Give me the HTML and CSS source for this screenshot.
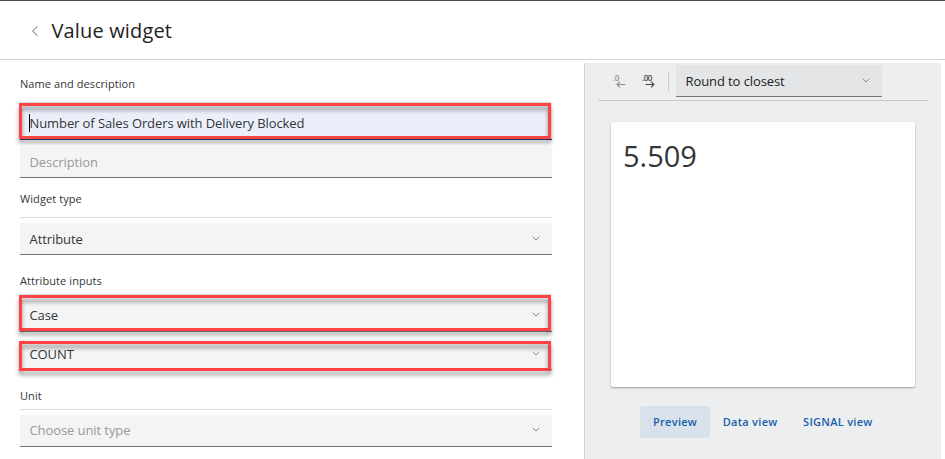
FILE: index.html
```html
<!DOCTYPE html>
<html lang="en">
<head>
<meta charset="utf-8">
<title>Value widget</title>
<link rel="stylesheet" href="styles.css">
</head>
<body>
<header class="header">
  <svg class="back" viewBox="0 0 8 12"><path d="M6.500 1.200 1.500 6l5 4.800"/></svg>
  <h1 class="title">Value widget</h1>
</header>
<main class="main">
  <form class="form">
    <div class="label">Name and description</div>
    <div class="field active raised frame frame-name"><span class="caret"></span><span>Number of Sales Orders with Delivery Blocked</span></div>
    <div class="field empty next"><span>Description</span></div>
    <div class="label">Widget type</div>
    <div class="field"><span>Attribute</span><svg class="chev" viewBox="0 0 8 5"><path d="M.7.8 4 4 7.300.8"/></svg></div>
    <div class="label low">Attribute inputs</div>
    <div class="field raised frame frame-case"><span>Case</span><svg class="chev" viewBox="0 0 8 5"><path d="M.7.8 4 4 7.300.8"/></svg></div>
    <div class="field next frame frame-count"><span>COUNT</span><svg class="chev" viewBox="0 0 8 5"><path d="M.7.8 4 4 7.300.8"/></svg></div>
    <div class="label low">Unit</div>
    <div class="field empty raised"><span>Choose unit type</span><svg class="chev" viewBox="0 0 8 5"><path d="M.7.8 4 4 7.300.8"/></svg></div>
  </form>
  <aside class="panel">
    <div class="toolbar">
      <div class="dec less"><span>.0</span><svg viewBox="0 0 9 6"><path d="M8.500 3H1M3.500.5 1 3l2.500 2.500"/></svg></div>
      <div class="dec more"><span>.00</span><svg viewBox="0 0 9 6"><path d="M.5 3H8M5.500.5 8 3 5.500 5.500"/></svg></div>
      <div class="sep"></div>
      <div class="field round"><span>Round to closest</span><svg class="chev" viewBox="0 0 8 5"><path d="M.7.8 4 4 7.300.8"/></svg></div>
    </div>
    <div class="card">5.509</div>
    <nav class="tabs">
      <span class="tab on">Preview</span>
      <span class="tab">Data view</span>
      <span class="tab">SIGNAL view</span>
    </nav>
  </aside>
</main>
</body>
</html>
```
FILE: styles.css
```css
* { box-sizing: border-box; }
body {
  margin: 0;
  height: 459px;
  overflow: hidden;
  background: #fff;
  color: #32363a;
  font-family: "Open Sans", sans-serif;
  font-size: 13px;
}
svg { fill: none; stroke: currentColor; display: block; }
.header {
  display: flex;
  align-items: center;
  height: 60px;
  padding: 2px 0 0 31px;
  border-top: 1px solid #4b4b4f;
  border-bottom: 1px solid #d3d3d4;
}
.back { width: 8px; height: 12px; color: #666; }
.title {
  margin: 0 0 0 12.500px;
  font-size: 20px;
  line-height: 28px;
  font-weight: 500;
  letter-spacing: .15px;
  color: #222;
}
.main { display: flex; height: 399px; }
.form { width: 532px; margin-left: 20px; }
.label {
  height: 40px;
  margin-bottom: 5px;
  padding-top: 12px;
  border-bottom: 1px solid #dcdcdc;
  font-size: 11px;
  line-height: 18px;
  letter-spacing: .08px;
}
.label:first-child { height: 43px; padding-top: 15px; }
.low { padding-top: 17px; }
.field {
  position: relative;
  display: flex;
  align-items: center;
  justify-content: space-between;
  height: 32px;
  padding: 1px 12px 0 9.500px;
  background: #f4f4f4;
  border-bottom: 1px solid #757575;
  line-height: 20px;
  letter-spacing: -.09px;
}
.raised { padding-top: 0; padding-bottom: 1px; }
.next { margin-top: 6px; }
.empty { color: #999; }
.active {
  justify-content: flex-start;
  height: 37px;
  margin-top: -5px;
  padding: 4px 12px 1px 9px;
  background: #ebeff9;
  border-bottom-color: #1b3d6d;
}
.caret { width: 1px; height: 18px; margin-right: -.5px; background: #000; }
.chev { width: 8px; height: 5px; margin-bottom: 1px; color: #888; }
.frame::after {
  content: "";
  position: absolute;
  left: -1px;
  right: 1px;
  border: 3px solid #fd4343;
  filter: drop-shadow(0 4px 2px rgba(0, 0, 0, .4));
}
.frame-name::after { top: 0; bottom: 0; }
.frame-case::after { top: -5px; bottom: 0; }
.frame-count::after { top: 3px; bottom: -2px; }
.panel {
  width: 357px;
  margin: 3px 0 0 32px;
  padding: 0 13px;
  background: #edeef0;
  border-left: 1px solid #d0d1d3;
}
.toolbar {
  display: flex;
  height: 38px;
  padding: 2px 0 0 15px;
  border-bottom: 1px solid #c8c9cb;
}
.dec { width: 14px; margin-top: 8px; font-size: 8px; line-height: 10px; letter-spacing: -.5px; }
.dec span { font-weight: 600; }
.dec svg { width: 10px; height: 7px; margin: -2px 0 0 3px; }
.less { color: #8b8d90; }
.more { width: 14px; margin-left: 15px; color: #444; }
.sep { width: 1px; height: 19px; margin: 7px 7px 0 12px; background: #cacbcd; }
.round { width: 206px; background: #e4e5e7; color: #222; }
.card {
  width: 304px;
  height: 265px;
  margin: 21px 0 0 13px;
  padding: 12px;
  background: #fff;
  border-radius: 2px;
  box-shadow: 0 1px 2px rgba(0, 0, 0, .35);
  font-size: 29px;
  line-height: 43px;
}
.tabs { display: flex; margin: 19px 0 0 42px; }
.tab {
  height: 32px;
  padding: 0 12.500px 0 13px;
  border-radius: 2px;
  font-size: 11px;
  line-height: 32px;
  font-weight: 600;
  letter-spacing: .29px;
  color: #1660aa;
}
.on { background: #d9e2ea; }
```
